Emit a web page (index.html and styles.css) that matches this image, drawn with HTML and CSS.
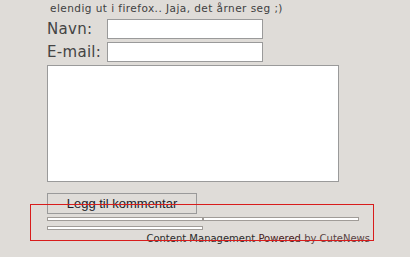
FILE: index.html
```html
<!DOCTYPE html>
<html lang="no">
<head>
    <meta charset="UTF-8">
    <title>Kommentarer</title>
    <link rel="stylesheet" href="styles.css">
</head>
<body>
    <div class="page">
        <p class="intro">elendig ut i firefox.. Jaja, det årner seg ;)</p>

        <form class="comment-form">
            <div class="row">
                <label for="name">Navn:</label>
                <input type="text" id="name" name="name">
            </div>
            <div class="row">
                <label for="mail">E-mail:</label>
                <input type="text" id="mail" name="mail">
            </div>
            <textarea id="comment" name="comment"></textarea>
            <button type="submit" class="submit-btn">Legg til kommentar</button>
        </form>

        <div class="bars">
            <div class="bar-row">
                <span class="bar"></span>
                <span class="bar"></span>
            </div>
            <div class="bar-row">
                <span class="bar"></span>
            </div>
        </div>

        <p class="powered">Content Management <span class="pw">Powered</span> <span class="by">by CuteNews</span></p>

        <div class="highlight"></div>
    </div>
</body>
</html>
```

FILE: styles.css
```css
body {
    margin: 0;
    background-color: #dfdcd8;
    font-family: "DejaVu Sans", Verdana, sans-serif;
    color: #3a3a3a;
}

.page {
    position: relative;
    width: 410px;
    height: 257px;
    overflow: hidden;
}

.intro {
    margin: 0;
    padding: 1px 0 0 50px;
    font-size: 10.5px;
    letter-spacing: 0.45px;
    line-height: 14px;
    color: #404040;
}

.comment-form {
    padding-left: 47px;
    margin-top: 4px;
}

.row {
    display: flex;
    align-items: center;
    height: 20px;
    margin-bottom: 3px;
}

.row label {
    width: 60px;
    font-size: 15px;
    letter-spacing: 0.3px;
    color: #444444;
}

.row input {
    width: 156px;
    height: 20px;
    margin: 0;
    padding: 0 2px;
    border: 1px solid #9a9a9a;
    background: #ffffff;
    box-sizing: border-box;
}

textarea {
    display: block;
    width: 292px;
    height: 117px;
    margin: 2px 0 0 0;
    padding: 2px;
    border: 1px solid #9a9a9a;
    background: #ffffff;
    box-sizing: border-box;
    resize: none;
}

.submit-btn {
    display: block;
    width: 150px;
    height: 21px;
    margin-top: 11px;
    padding: 0;
    border: 1px solid #9a9a9a;
    background-color: #dfdcd8;
    font-family: "Liberation Sans", Arial, sans-serif;
    font-size: 13px;
    color: #1e1e28;
}

.bars {
    padding-left: 47px;
    margin-top: 3px;
}

.bar-row {
    display: flex;
    margin-bottom: 5px;
}

.bar {
    display: block;
    width: 156px;
    height: 4px;
    border: 1px solid #a09c98;
    background: #ffffff;
    box-sizing: border-box;
}

.powered {
    margin: -2px 0 0 0;
    width: 370px;
    text-align: right;
    font-size: 10px;
    color: #2c2c2c;
}

.powered .pw {
    color: #4a2020;
}

.powered .by {
    color: #5a4444;
}

.highlight {
    position: absolute;
    left: 30px;
    top: 204px;
    width: 342px;
    height: 35px;
    border: 1px solid #d81c1c;
}
```
